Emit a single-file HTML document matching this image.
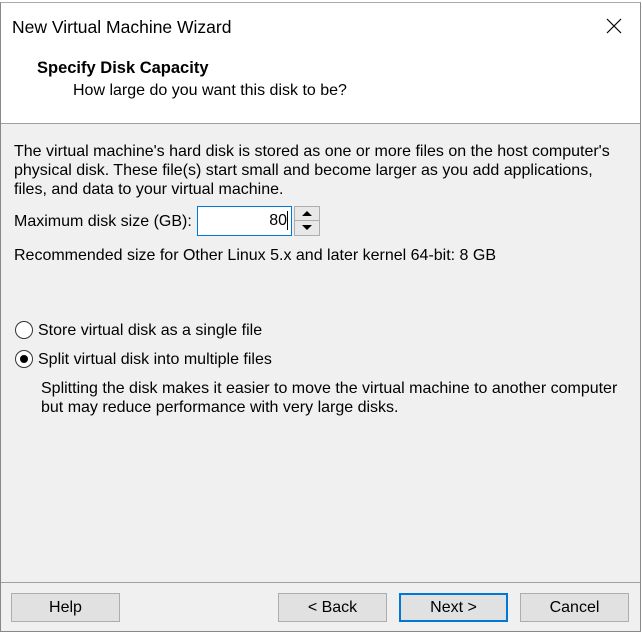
<!DOCTYPE html>
<html><head><style>
body{margin:0;width:642px;height:632px;background:#fff;font-family:"Liberation Sans",sans-serif;font-size:16px;color:#000;position:relative;overflow:hidden}
.win{position:absolute;left:0;top:2px;width:639px;height:628px;border:1px solid #888;background:#f0f0f0;border-top-color:#aaa}
.hdr{position:absolute;left:0;top:0;width:639px;height:120px;background:#fff;border-bottom:1px solid #a0a0a0}
.t{position:absolute;white-space:nowrap}
.btn{position:absolute;top:590px;height:27px;width:107px;background:#e1e1e1;border:1px solid #adadad;text-align:center;line-height:27px;font-size:16px}
.radio{position:absolute;width:16px;height:16px;border:1px solid #333;border-radius:50%;background:#fff}
</style></head><body>
<div class="win">
<div class="hdr">
<div class="t" style="left:11px;top:14px;font-size:17.5px">New Virtual Machine Wizard</div>
<svg style="position:absolute;left:605px;top:15px" width="16" height="16"><path d="M1 1L15 15M15 1L1 15" stroke="#000" stroke-width="1.2"/></svg>
<div class="t" style="left:36px;top:56px;font-weight:bold;font-size:16.5px">Specify Disk Capacity</div>
<div class="t" style="left:72px;top:79px">How large do you want this disk to be?</div>
</div>
<div class="t" style="left:13px;top:139px;line-height:19px">The virtual machine's hard disk is stored as one or more files on the host computer's<br>physical disk. These file(s) start small and become larger as you add applications,<br>files, and data to your virtual machine.</div>
<div class="t" style="left:13px;top:210px">Maximum disk size (GB):</div>
<div style="position:absolute;left:196px;top:203px;width:93px;height:28px;border:1px solid #0078d7;background:#fff"><span class="t" style="right:4px;top:5px">80</span><span style="position:absolute;left:89px;top:4px;width:1px;height:19px;background:#000"></span></div>
<div style="position:absolute;left:293px;top:203px;width:24px;height:28px;border:1px solid #adadad;background:#e8e8e8"></div>
<div style="position:absolute;left:293px;top:217px;width:25px;height:1px;background:#adadad"></div>
<svg style="position:absolute;left:300px;top:207px" width="12" height="22"><path d="M1 6L6 1L11 6Z M1 15L6 20L11 15Z" fill="#000"/></svg>
<div class="t" style="left:13px;top:244px">Recommended size for Other Linux 5.x and later kernel 64-bit: 8 GB</div>
<div class="radio" style="left:14px;top:318px"></div>
<div class="t" style="left:37px;top:319px">Store virtual disk as a single file</div>
<div class="radio" style="left:14px;top:347px"><div style="position:absolute;left:4px;top:4px;width:8px;height:8px;border-radius:50%;background:#000"></div></div>
<div class="t" style="left:37px;top:348px">Split virtual disk into multiple files</div>
<div class="t" style="left:40px;top:376px;line-height:19px">Splitting the disk makes it easier to move the virtual machine to another computer<br>but may reduce performance with very large disks.</div>
<div style="position:absolute;left:0;top:579px;width:639px;height:1px;background:#a0a0a0"></div>
<div class="btn" style="left:10px">Help</div>
<div class="btn" style="left:277px">&lt; Back</div>
<div class="btn" style="left:398px;border:2px solid #0078d7;height:25px;width:105px;line-height:25px">Next &gt;</div>
<div class="btn" style="left:519px">Cancel</div>
</div>
</body></html>
